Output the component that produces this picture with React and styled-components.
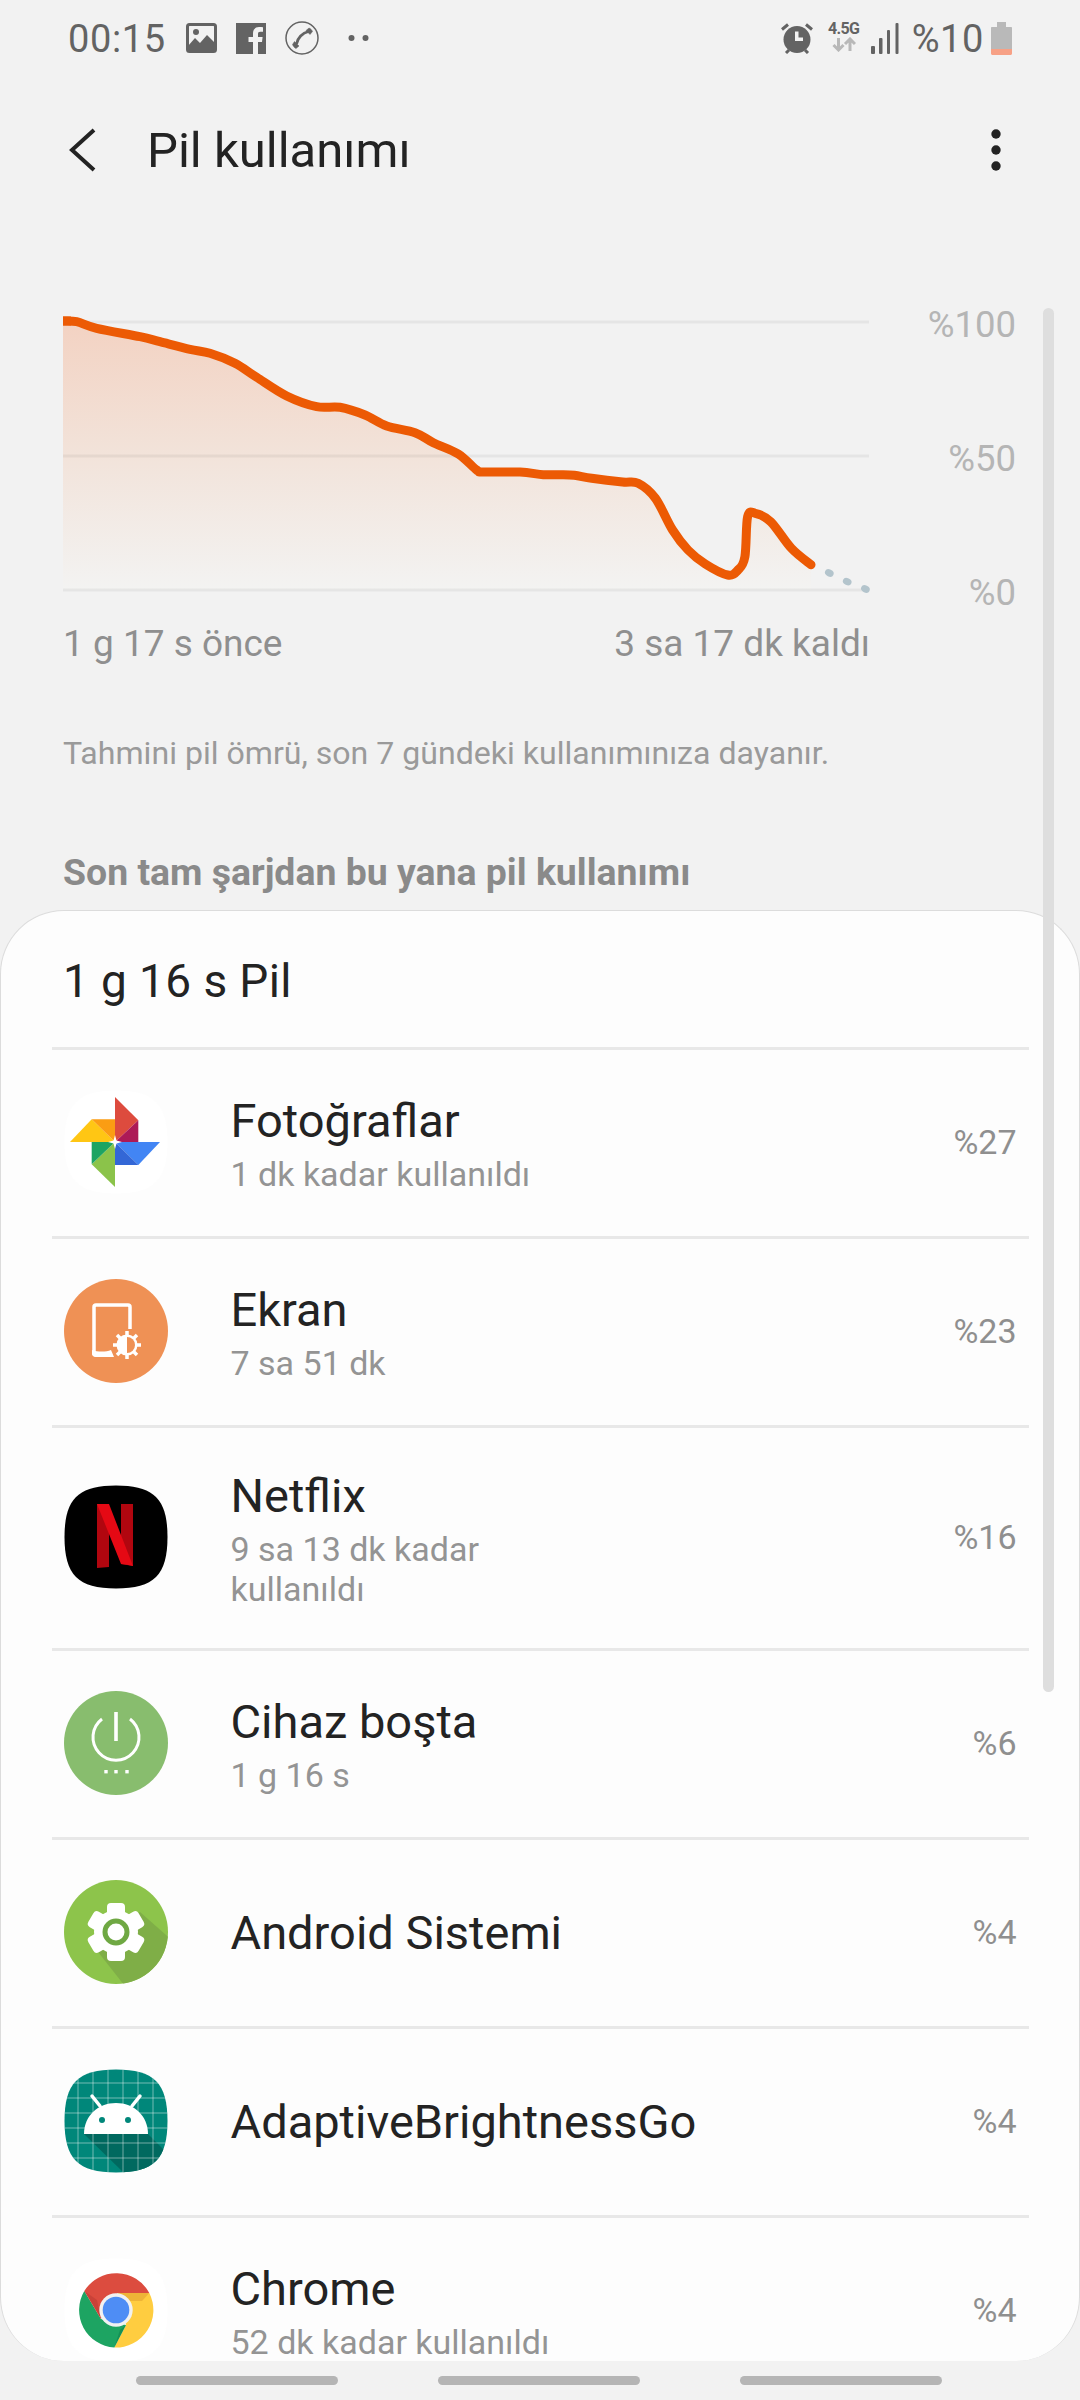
import React from "react";
import styled, { createGlobalStyle } from "styled-components";

const GlobalStyle = createGlobalStyle`
  html, body { margin: 0; padding: 0; background: #f2f2f2; }
  body { font-family: Roboto, "Noto Sans", sans-serif; }
  #root { width: 1080px; height: 2400px; overflow: hidden; }
`;

const Page = styled.div`
  position: relative;
  width: 1080px;
  height: 2400px;
  background: #f2f2f2;
  overflow: hidden;
`;

const StatusBar = styled.div`
  height: 76px;
  padding: 0 68px 0 68px;
  box-sizing: border-box;
  display: flex;
  align-items: center;
  justify-content: space-between;
  color: #636363;
`;
const StatusGroup = styled.div`
  display: flex;
  align-items: center;
  gap: ${(p) => p.$gap}px;
`;
const StatusText = styled.span`
  font-size: 38px;
  line-height: 44px;
  letter-spacing: 0.6px;
  font-weight: 400;
  margin-top: 1px;
  margin-right: ${(p) => p.$trim || 0}px;
`;
const DotsSlot = styled.span`
  display: flex;
  margin-left: 10px;
`;
const NetBlock = styled.div`
  width: 34px;
  height: 34px;
  display: flex;
  flex-direction: column;
  align-items: center;
  margin-right: -3px;
`;
const NetLabel = styled.span`
  font-size: 16px;
  line-height: 16px;
  font-weight: 700;
  letter-spacing: -0.6px;
  color: #636363;
`;

const Toolbar = styled.div`
  height: 148px;
  padding: 0 79px 0 69px;
  display: flex;
  align-items: center;
  box-sizing: border-box;
`;
const Title = styled.h1`
  margin: 2px 0 0 51px;
  flex: 1;
  font-size: 49px;
  line-height: 56px;
  font-weight: 400;
  color: #232323;
`;

const ChartSection = styled.section`
  margin-top: 78px;
  padding: 0 64px 0 63px;
  display: flex;
  justify-content: space-between;
`;
const PlotColumn = styled.div`
  width: 807px;
  padding-top: 8px;
`;
const PlotSvg = styled.svg`
  display: block;
  width: 810px;
  height: 290px;
`;
const AxisColumn = styled.div`
  height: 308px;
  margin-top: 3px;
  display: flex;
  flex-direction: column;
  justify-content: space-between;
  align-items: flex-end;
`;
const AxisLabel = styled.span`
  font-size: 36.5px;
  line-height: 40px;
  color: #b5b5b5;
`;
const TimeRow = styled.div`
  display: flex;
  justify-content: space-between;
  margin-top: 22px;
  font-size: 37px;
  line-height: 44px;
  color: #8f8f8f;
`;
const Caption = styled.p`
  margin: 67px 0 0 63px;
  font-size: 32.1px;
  line-height: 40px;
  color: #9a9a9a;
`;
const SectionLabel = styled.h2`
  margin: 79px 0 0 63px;
  font-size: 37.4px;
  line-height: 40px;
  font-weight: 700;
  color: #8a8a8a;
`;

const Sheet = styled.div`
  margin-top: 18px;
  height: 1451px;
  box-sizing: border-box;
  background: #fdfdfd;
  border: 1.5px solid #dcdcdc;
  border-bottom: none;
  border-radius: 64px;
  overflow: hidden;
`;
const SheetHead = styled.div`
  height: 136px;
  display: flex;
  align-items: center;
  padding: 3px 0 0 62px;
  box-sizing: border-box;
  font-size: 46px;
  line-height: 52px;
  color: #232323;
  letter-spacing: 0.4px;
`;
const RowList = styled.div`
  margin: 0 50.5px;
`;
const Row = styled.div`
  height: ${(p) => (p.$tall ? 223 : 189)}px;
  box-sizing: border-box;
  border-top: 3px solid #e8e8e8;
  padding: 0 12px;
  display: flex;
  align-items: center;
`;
const IconBox = styled.div`
  width: 104px;
  height: 104px;
  flex: none;
  margin-bottom: 3px;
  svg { display: block; }
`;
const RowText = styled.div`
  flex: 1;
  margin-left: 63px;
  min-width: 0;
`;
const RowName = styled.div`
  font-size: 47px;
  line-height: 56px;
  color: #232323;
`;
const RowSub = styled.div`
  margin-top: 5px;
  font-size: 34px;
  line-height: 40px;
  color: #949494;
  max-width: 330px;
`;
const RowPercent = styled.div`
  font-size: 34px;
  line-height: 40px;
  color: #8f8f8f;
  margin-bottom: 2px;
`;

const Scrollbar = styled.div`
  position: absolute;
  left: 1043px;
  top: 308px;
  width: 11px;
  height: 1384px;
  border-radius: 6px;
  background: #dedede;
`;

const NavRow = styled.div`
  margin-top: 15px;
  padding-left: 136px;
  display: flex;
  gap: 100px;
`;
const NavPill = styled.div`
  width: 202px;
  height: 9px;
  border-radius: 5px;
  background: #b5b5b5;
`;

const LINE = [
  [63, 321], [76.7, 321.7], [96.7, 328.3], [140, 336.7], [160, 341.7], [190, 349.3], [210, 353.3],
  [235, 363.3], [256.7, 377.3], [286.7, 396], [316.7, 406.7], [340, 407.3], [365, 415], [386.7, 426],
  [415, 432.7], [433.3, 442.7], [458.3, 454], [476.7, 470], [483.3, 472], [520, 472], [543.3, 474.7],
  [560, 474.7], [574.4, 475.3], [591.7, 478.3], [622.6, 482], [638.1, 483.3], [655.4, 498.3],
  [672.6, 530], [688, 550], [705.3, 564], [727.7, 575], [738, 570], [744.9, 556.7], [747.6, 516.7],
  [755.2, 513.3], [770.7, 521.7], [791.4, 548.3], [811, 564.7],
];

function smoothPath(pts) {
  let d = `M${pts[0][0]} ${pts[0][1]}`;
  for (let i = 0; i < pts.length - 1; i++) {
    const p0 = pts[Math.max(i - 1, 0)];
    const p1 = pts[i];
    const p2 = pts[i + 1];
    const p3 = pts[Math.min(i + 2, pts.length - 1)];
    const c1 = [p1[0] + (p2[0] - p0[0]) / 6, p1[1] + (p2[1] - p0[1]) / 6];
    const c2 = [p2[0] - (p3[0] - p1[0]) / 6, p2[1] - (p3[1] - p1[1]) / 6];
    d += `C${c1[0].toFixed(1)} ${c1[1].toFixed(1)} ${c2[0].toFixed(1)} ${c2[1].toFixed(1)} ${p2[0]} ${p2[1]}`;
  }
  return d;
}

function Chart() {
  const line = smoothPath(LINE);
  return (
    <PlotSvg viewBox="63 310 810 290">
      <defs>
        <linearGradient id="area" x1="0" y1="0" x2="0" y2="1">
          <stop offset="0" stopColor="#f3d2c2" />
          <stop offset="0.5" stopColor="#f2e3da" />
          <stop offset="1" stopColor="#f3f3f2" />
        </linearGradient>
      </defs>
      <path d={`${line}L811 590L63 590Z`} fill="url(#area)" />
      {[322, 456, 590].map((y) => (
        <rect key={y} x="63" y={y - 1.5} width="806" height="3" fill="#000" opacity="0.05" />
      ))}
      <path d={line} fill="none" stroke="#ec5a04" strokeWidth="9" strokeLinecap="round" strokeLinejoin="round" />
      <rect x="63" y="316.500" width="8" height="9" fill="#ec5a04" />
      {[[829.3, 573], [847.2, 581.7], [865.4, 589]].map(([x, y]) => (
        <ellipse key={x} cx={x} cy={y} rx="4.500" ry="3.500" fill="#b3c4cc" transform={`rotate(25 ${x} ${y})`} />
      ))}
    </PlotSvg>
  );
}

const ImageIcon = () => (
  <svg width="31" height="30" viewBox="0 0 31 30">
    <rect x="1.5" y="1.5" width="28" height="27" rx="2" fill="#f2f2f2" stroke="none" />
    <path d="M2 23L9 15L14 20L21 12L29 20V28H2Z" fill="#636363" />
    <circle cx="10" cy="9" r="3" fill="#636363" />
    <rect x="1.5" y="1.5" width="28" height="27" rx="2" fill="none" stroke="#636363" strokeWidth="3" />
  </svg>
);
const FacebookIcon = () => (
  <svg width="30" height="31" viewBox="0 0 30 31">
    <path d="M0 0H30V31H22V19H26L26.6 14H22V11C22 9.5 22.6 8.700 24.300 8.700H27V4.200C26 4 24.500 4 23 4C19.500 4 17 6.200 17 10.300V14H12.500V19H17V31H0Z" fill="#636363" />
  </svg>
);
const CallIcon = () => (
  <svg width="34" height="34" viewBox="0 0 34 34" fill="none" stroke="#636363">
    <circle cx="17" cy="17" r="16" strokeWidth="1.500" />
    <path d="M11.500 23C12.500 17 17.500 12 23.500 10.500" strokeWidth="2.800" />
    <path d="M9.500 20.500L14 25L11 27.500C9.800 27 8 25 7.500 23.500Z" fill="#636363" strokeWidth="0.500" />
    <path d="M21 9.500L25 13.500L27.500 10.500C27 9 25.500 7.500 24 7Z" fill="#636363" strokeWidth="0.500" />
  </svg>
);
const DotsIcon = () => (
  <svg width="21" height="8" viewBox="0 0 21 8">
    <circle cx="3.500" cy="4" r="3" fill="#636363" />
    <circle cx="17.500" cy="4" r="3" fill="#636363" />
  </svg>
);
const AlarmIcon = () => (
  <svg width="34" height="32" viewBox="0 0 34 32">
    <circle cx="17" cy="17.500" r="13.500" fill="#636363" />
    <path d="M2 7.500L8 2.500M32 7.500L26 2.500M6 31L9 28M28 31L25 28" stroke="#636363" strokeWidth="3" />
    <path d="M15 9.500H18.500V15.500H23V19H15Z" fill="#f2f2f2" />
  </svg>
);
const ArrowsIcon = () => (
  <svg width="24" height="15" viewBox="0 0 24 15" fill="none" stroke="#b8b8b8" strokeWidth="3">
    <path d="M6.500 1V13M1.500 8L6.500 13L11.500 8" />
    <path d="M18 14V2M13 7L18 2L23 7" />
  </svg>
);
const SignalIcon = () => (
  <svg width="28" height="31" viewBox="0 0 28 31" fill="#636363">
    <rect x="0" y="23" width="4" height="8" rx="1" />
    <rect x="8" y="15" width="3.500" height="16" rx="1" />
    <rect x="16" y="7" width="3" height="24" rx="1" />
    <rect x="24.500" y="0" width="3" height="31" rx="1" />
  </svg>
);
const BatteryIcon = () => (
  <svg width="21" height="33" viewBox="0 0 21 33">
    <path d="M6 0H15V5H20C20.600 5 21 5.400 21 6V27H0V6C0 5.400 .4 5 1 5H6Z" fill="#b9b9b9" />
    <path d="M0 27H21V31.500C21 32.300 20.300 33 19.500 33H1.500C.7 33 0 32.300 0 31.500Z" fill="#f7a186" />
  </svg>
);
const BackIcon = () => (
  <svg width="27" height="44" viewBox="0 0 27 44" fill="none">
    <path d="M25 2L3 22L25 42" stroke="#232323" strokeWidth="4" />
  </svg>
);
const KebabIcon = () => (
  <svg width="10" height="42" viewBox="0 0 10 42" fill="#232323">
    <circle cx="5" cy="5" r="4.700" />
    <circle cx="5" cy="21" r="4.700" />
    <circle cx="5" cy="37" r="4.700" />
  </svg>
);

const SQUIRCLE = "M52 .5C90 .5 103.500 14 103.500 52C103.500 90 90 103.500 52 103.500C14 103.500 .5 90 .5 52C.5 14 14 .5 52 .5Z";

const PhotosIcon = () => (
  <svg width="104" height="104" viewBox="0 0 104 104">
    <path d={SQUIRCLE} fill="#fff" />
    <g transform="translate(-1 0)">
      <path d="M52 7L75.300 30.300L52 52Z" fill="#dd4b3e" />
      <path d="M75.300 30.300V52H52Z" fill="#ad1a57" />
      <path d="M52 52H97L75.300 75Z" fill="#4285f4" />
      <path d="M52 52L75.300 75H52Z" fill="#3367d6" />
      <path d="M52 52V97L28.700 74.300Z" fill="#8bc34a" />
      <path d="M52 52L28.700 74.300V52Z" fill="#1da462" />
      <path d="M52 52H7L28.700 29.300Z" fill="#ffc614" />
      <path d="M28.700 29.300H52V52Z" fill="#fb9d13" />
      <path d="M52 45L53.500 50.500L59 52L53.500 53.500L52 59L50.500 53.500L45 52L50.500 50.500Z" fill="#fff" />
    </g>
  </svg>
);
const ScreenIcon = () => (
  <svg width="104" height="104" viewBox="0 0 104 104">
    <circle cx="52" cy="52" r="52" fill="#ef9155" />
    <path d="M48 76H32C30.500 76 30 75 30 74V28C30 26.500 31 26 32 26H64C65.500 26 66 27 66 28V50" fill="none" stroke="#fff" strokeWidth="3.500" />
    <path d="M28 71C34 73 42 73 47 71L50 78H32C30 78 28 77 28 75Z" fill="#fff" />
    <path d="M63 52V80M49 66H77M53 56L73 76M73 56L53 76" stroke="#fff" strokeWidth="3.500" />
    <circle cx="63" cy="66" r="10.500" fill="#fff" />
    <path d="M63 58A8 8 0 0 1 63 74Z" fill="#ef9155" />
  </svg>
);
const NetflixIcon = () => (
  <svg width="104" height="104" viewBox="0 0 104 104">
    <path d={SQUIRCLE} fill="#000" />
    <path d="M57 19H69V81L57 79Z" fill="#b1060f" />
    <path d="M33 19H45V82L33 83Z" fill="#b1060f" />
    <path d="M33 19H45L69 81C65 80 61 79.500 57 79Z" fill="#e50914" />
  </svg>
);
const PowerIcon = () => (
  <svg width="104" height="104" viewBox="0 0 104 104">
    <circle cx="52" cy="52" r="52" fill="#88bd6e" />
    <path d="M38 28A23 23 0 1 0 66 28" fill="none" stroke="#fff" strokeWidth="3" />
    <rect x="50.200" y="21" width="3.600" height="29" fill="#fff" />
    {[42, 52, 63].map((x) => (
      <rect key={x} x={x - 1.700} y="79" width="3.400" height="3.400" fill="#fff" />
    ))}
  </svg>
);
const SettingsIcon = () => (
  <svg width="104" height="104" viewBox="0 0 104 104">
    <defs>
      <clipPath id="gearClip"><circle cx="52" cy="52" r="52" /></clipPath>
    </defs>
    <circle cx="52" cy="52" r="52" fill="#8dc44b" />
    <path d="M27 63L76 32L110 62V110H64Z" fill="#7fae47" clipPath="url(#gearClip)" />
    <circle cx="52" cy="52" r="22" fill="#fff" />
    {[0, 60, 120].map((a) => (
      <rect key={a} x="43" y="23" width="18" height="58" rx="4" fill="#fff" transform={`rotate(${a} 52 52)`} />
    ))}
    <circle cx="52" cy="52" r="11" fill="#fff" stroke="#6fa843" strokeWidth="5" />
  </svg>
);
const AndroidIcon = () => {
  const lines = [14, 29, 44, 59, 74, 89];
  return (
    <svg width="104" height="104" viewBox="0 0 104 104">
      <defs>
        <clipPath id="droidClip"><path d={SQUIRCLE} /></clipPath>
      </defs>
      <path d={SQUIRCLE} fill="#00877a" />
      <g clipPath="url(#droidClip)">
        <path d="M20 65H84L104 85V104H60Z" fill="#00695f" />
        {lines.map((v) => (
          <g key={v} stroke="#fff" strokeOpacity="0.45" strokeWidth="1">
            <path d={`M${v} 0V104`} />
            <path d={`M0 ${v}H104`} />
          </g>
        ))}
      </g>
      <path d="M28 27L36 37M76 27L68 37" stroke="#fff" strokeWidth="3.500" strokeLinecap="round" />
      <path d="M20 65C20 47 34 34 52 34C70 34 84 47 84 65Z" fill="#fff" />
      <circle cx="38" cy="51" r="3" fill="#00877a" />
      <circle cx="64" cy="51" r="3" fill="#00877a" />
    </svg>
  );
};
const ChromeIcon = () => (
  <svg width="104" height="104" viewBox="0 0 104 104">
    <path d={SQUIRCLE} fill="#fff" />
    <path d="M85.300 35A37.500 37.500 0 0 1 50.300 89.500L62 67L53.700 35Z" fill="#ffcd40" />
    <path d="M53.700 35H85.300L78 43H60Z" fill="#e0a030" opacity="0.55" />
    <path d="M50.300 89.500A37.500 37.500 0 0 1 20.300 33L37 61L62 67Z" fill="#1da462" />
    <path d="M62 67L50.300 89.500L56 72Z" fill="#0d7a44" opacity="0.45" />
    <path d="M20.300 33A37.500 37.500 0 0 1 85.300 35L53.700 35L37 61Z" fill="#dc4c3f" />
    <path d="M20.300 33L37 61L33 42Z" fill="#a8322a" opacity="0.35" />
    <circle cx="52" cy="52" r="16.700" fill="#f1f1f1" />
    <circle cx="52" cy="52" r="13.300" fill="#4e8df5" />
  </svg>
);

const ROWS = [
  { name: "Fotoğraflar", sub: "1 dk kadar kullanıldı", pct: "%27", Icon: PhotosIcon },
  { name: "Ekran", sub: "7 sa 51 dk", pct: "%23", Icon: ScreenIcon },
  { name: "Netflix", sub: "9 sa 13 dk kadar kullanıldı", pct: "%16", Icon: NetflixIcon, tall: true },
  { name: "Cihaz boşta", sub: "1 g 16 s", pct: "%6", Icon: PowerIcon },
  { name: "Android Sistemi", pct: "%4", Icon: SettingsIcon },
  { name: "AdaptiveBrightnessGo", pct: "%4", Icon: AndroidIcon },
  { name: "Chrome", sub: "52 dk kadar kullanıldı", pct: "%4", Icon: ChromeIcon },
];

export default function App() {
  return (
    <Page>
      <GlobalStyle />
      <StatusBar>
        <StatusGroup $gap={19}>
          <StatusText $trim={1}>00:15</StatusText>
          <ImageIcon />
          <FacebookIcon />
          <CallIcon />
          <DotsSlot><DotsIcon /></DotsSlot>
        </StatusGroup>
        <StatusGroup $gap={13}>
          <AlarmIcon />
          <NetBlock>
            <NetLabel>4.5G</NetLabel>
            <ArrowsIcon />
          </NetBlock>
          <SignalIcon />
          <StatusText $trim={-6}>%10</StatusText>
          <BatteryIcon />
        </StatusGroup>
      </StatusBar>
      <Toolbar>
        <BackIcon />
        <Title>Pil kullanımı</Title>
        <KebabIcon />
      </Toolbar>
      <ChartSection>
        <PlotColumn>
          <Chart />
          <TimeRow>
            <span>1 g 17 s önce</span>
            <span>3 sa 17 dk kaldı</span>
          </TimeRow>
        </PlotColumn>
        <AxisColumn>
          <AxisLabel>%100</AxisLabel>
          <AxisLabel>%50</AxisLabel>
          <AxisLabel>%0</AxisLabel>
        </AxisColumn>
      </ChartSection>
      <Caption>Tahmini pil ömrü, son 7 gündeki kullanımınıza dayanır.</Caption>
      <SectionLabel>Son tam şarjdan bu yana pil kullanımı</SectionLabel>
      <Sheet>
        <SheetHead>1 g 16 s Pil</SheetHead>
        <RowList>
          {ROWS.map(({ name, sub, pct, Icon, tall }) => (
            <Row key={name} $tall={tall}>
              <IconBox><Icon /></IconBox>
              <RowText>
                <RowName>{name}</RowName>
                {sub && <RowSub>{sub}</RowSub>}
              </RowText>
              <RowPercent>{pct}</RowPercent>
            </Row>
          ))}
        </RowList>
      </Sheet>
      <NavRow>
        <NavPill />
        <NavPill />
        <NavPill />
      </NavRow>
      <Scrollbar />
    </Page>
  );
}
